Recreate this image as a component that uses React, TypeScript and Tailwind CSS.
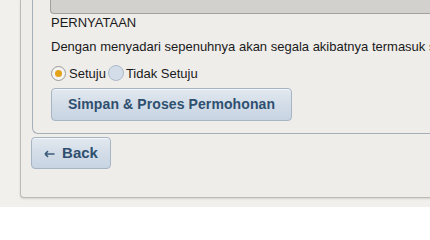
import React from "react";

export default function App() {
  return (
    <div
      className="w-[430px] h-[207px] overflow-hidden bg-[#f2f0ed] text-[#1a1a1a]"
      style={{ fontFamily: '"Liberation Sans", Arial, sans-serif' }}
    >
      <div className="ml-[20px] w-[440px] h-[198px] bg-[#efedea] border-l border-b border-[#bdbab6] rounded-bl-[4px] shadow-[0_1px_2px_rgba(0,0,0,0.12)] pl-[11px] flex flex-col">
        {/* fieldset */}
        <div className="h-[134px] border-l border-b border-[#a6aeb7] rounded-bl-[6px] pl-[18px] flex flex-col">
          <div className="h-[14px] bg-[#d3d1ce] border-l border-b border-[#a3a19e] rounded-bl-[4px] -ml-[1px]" />
          <div className="mt-[1px] h-[15px] leading-[15px] text-[13px]">PERNYATAAN</div>
          <div className="mt-[9px] h-[15px] leading-[15px] text-[13px] whitespace-nowrap">
            Dengan menyadari sepenuhnya akan segala akibatnya termasuk sanksi
          </div>
          <div className="mt-[11px] h-[16px] flex items-center text-[13px] leading-[15px]">
            <span className="w-[15px] h-[15px] rounded-full border border-[#9a9996] bg-[#f4f4f2] flex items-center justify-center shrink-0">
              <span className="w-[7px] h-[7px] rounded-full bg-[#e3a21a]" />
            </span>
            <span className="ml-[3px]">Setuju</span>
            <span className="ml-[2px] w-[16px] h-[16px] rounded-full border border-[#aebaca] bg-[#d2dde9] shrink-0" />
            <span className="ml-[2px]">Tidak Setuju</span>
          </div>
          <button className="mt-[7px] w-[241px] h-[33px] rounded-[4px] border border-[#a7b4c3] bg-gradient-to-b from-[#e2e8ef] via-[#d3dde8] to-[#c7d4e2] text-[#2f4f6f] font-bold text-[14px] tracking-[0.1px] shadow-[0_1px_0_rgba(255,255,255,0.6)_inset]">
            Simpan &amp; Proses Permohonan
          </button>
        </div>
        <button className="mt-[3px] -ml-[1px] w-[80px] h-[32px] rounded-[4px] border border-[#a7b4c3] bg-gradient-to-b from-[#e2e8ef] via-[#d3dde8] to-[#c7d4e2] text-[#2f4f6f] font-bold text-[15px] flex items-center justify-center gap-[7px] shadow-[0_1px_0_rgba(255,255,255,0.6)_inset]">
          <svg width="11" height="8" viewBox="0 0 11 8" className="mt-[1px]">
            <path d="M1 4 H10.5 M1 4 L4 1.2 M1 4 L4 6.8" stroke="#3e5c7a" strokeWidth="1.6" fill="none" />
          </svg>
          <span>Back</span>
        </button>
      </div>
    </div>
  );
}
